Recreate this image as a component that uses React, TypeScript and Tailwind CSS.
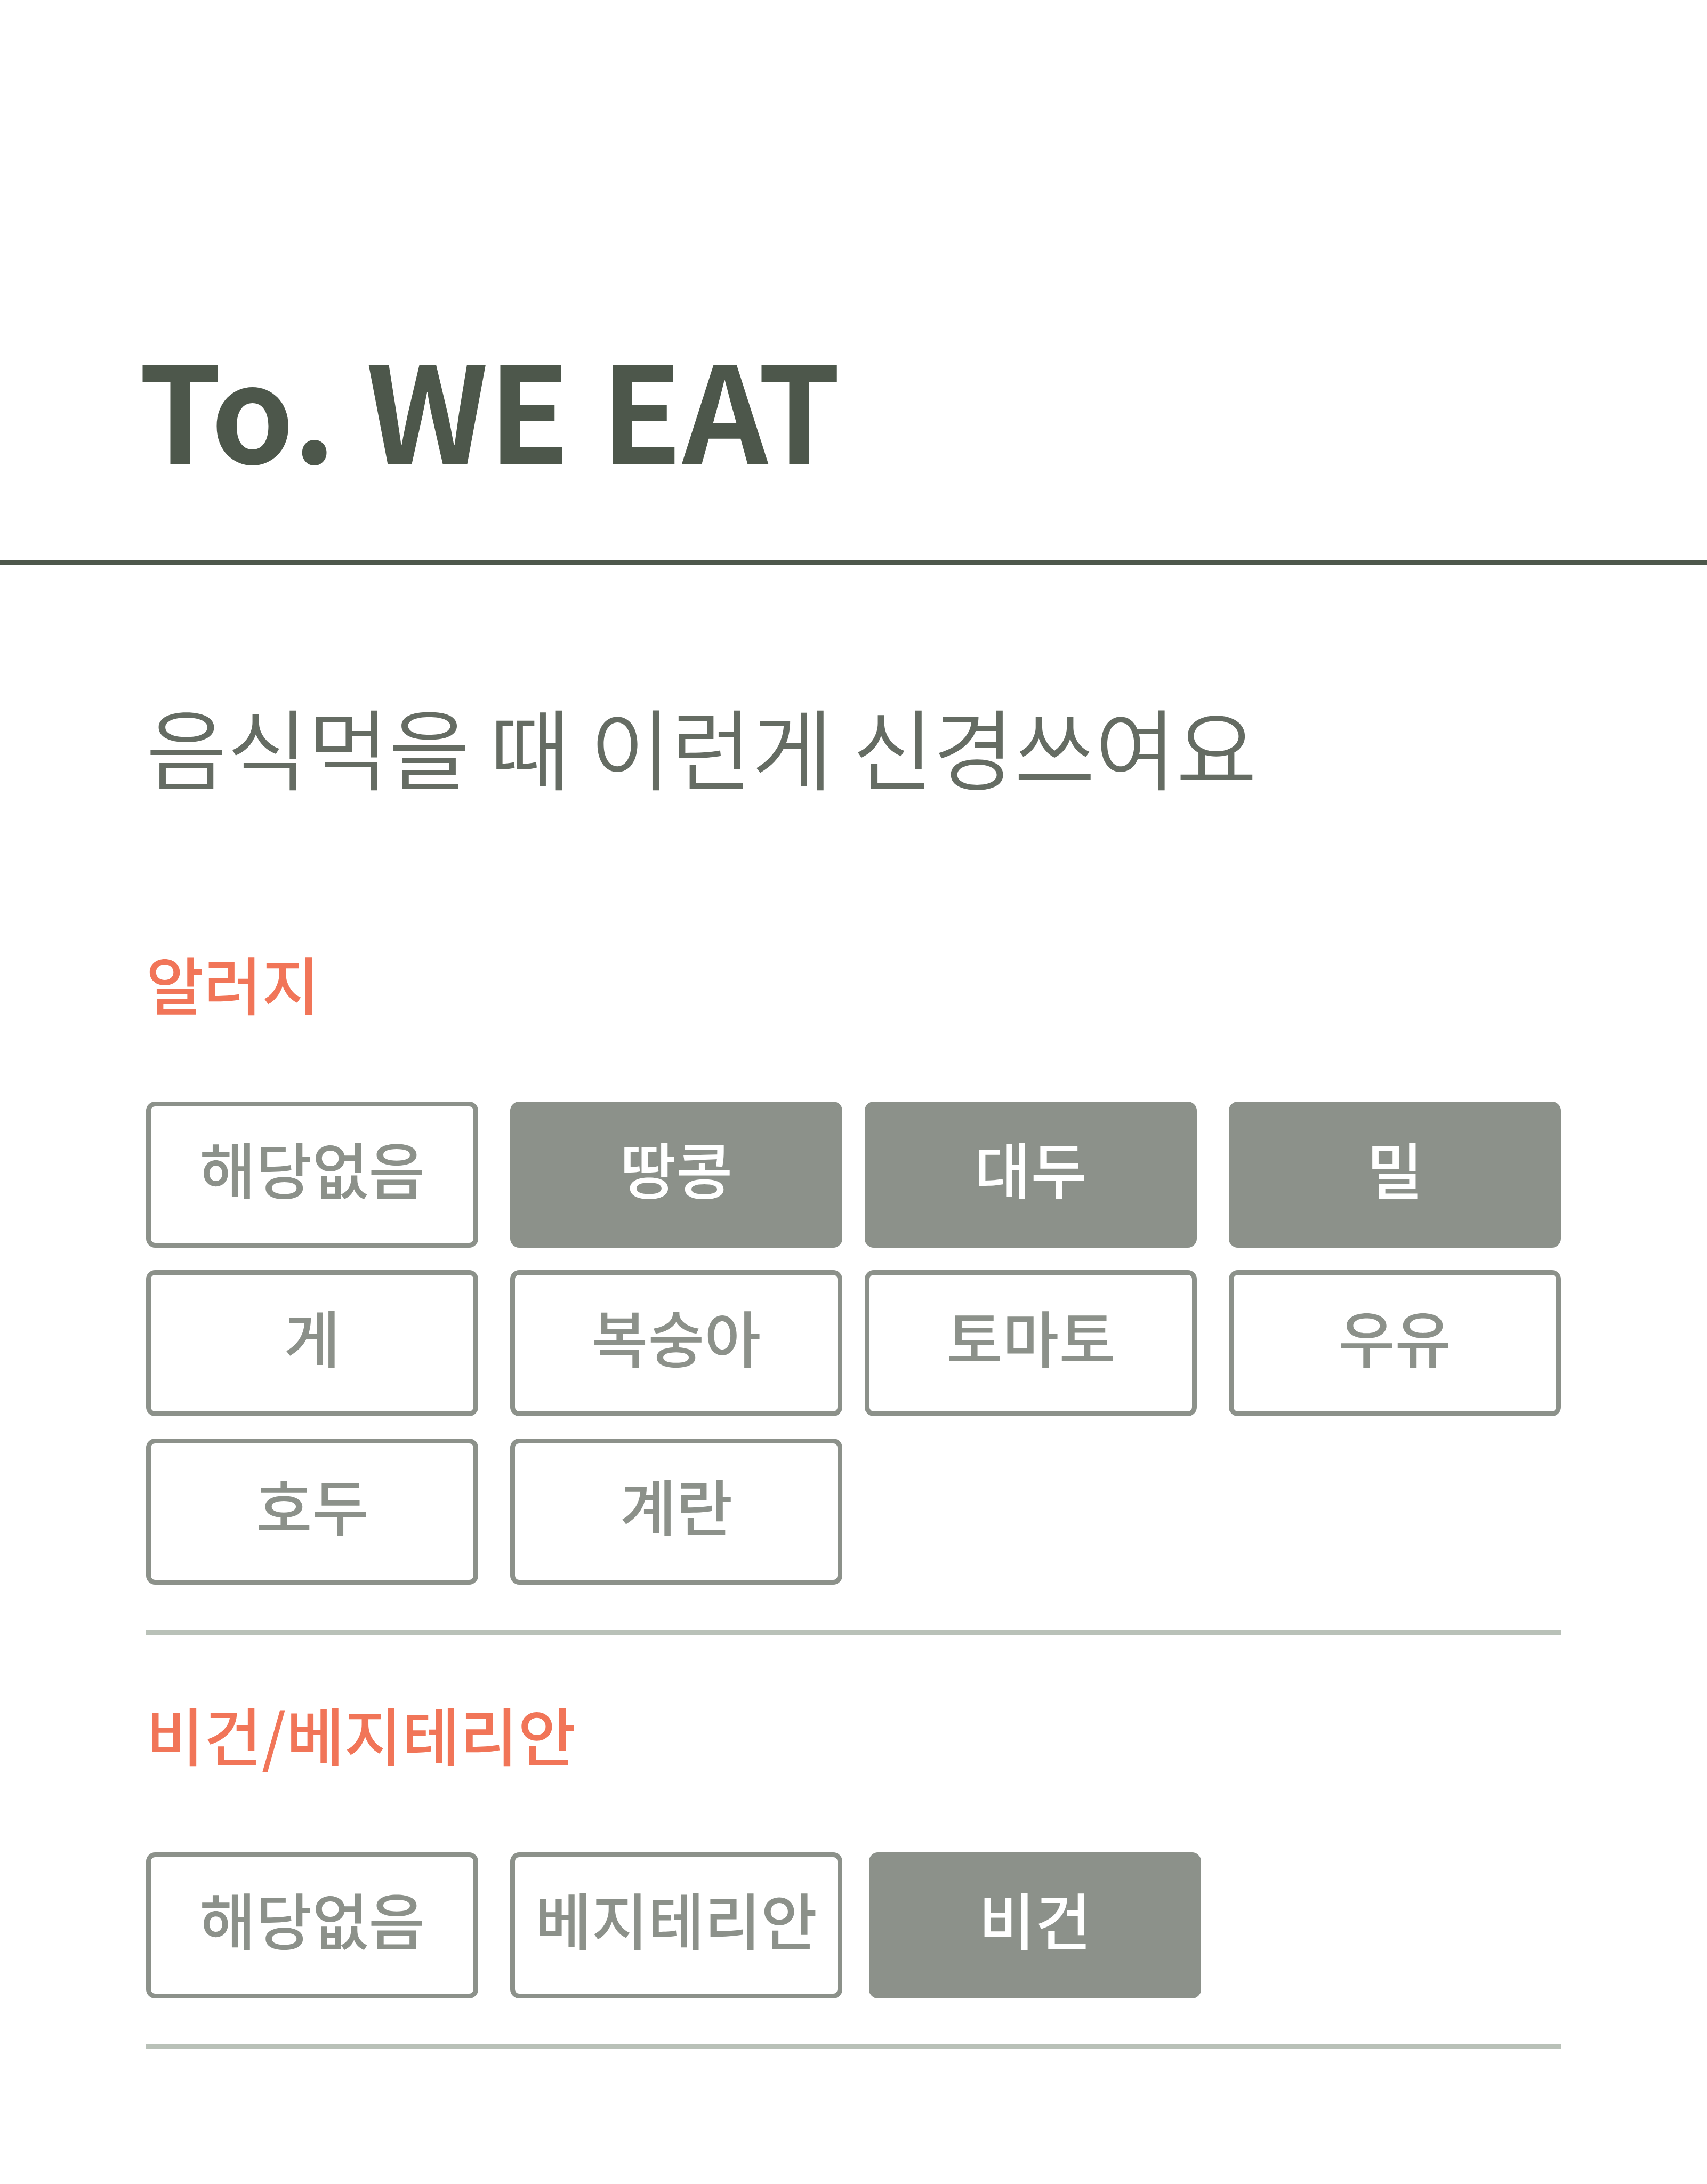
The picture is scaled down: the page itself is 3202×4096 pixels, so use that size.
import { useState } from "react";
import clsx from "clsx";

type Option = { name: string; column: string };

const ALLERGIES: Option[] = [
  { name: "해당없음", column: "col-start-1" },
  { name: "땅콩", column: "col-start-3" },
  { name: "대두", column: "col-start-5" },
  { name: "밀", column: "col-start-7" },
  { name: "게", column: "col-start-1" },
  { name: "복숭아", column: "col-start-3" },
  { name: "토마토", column: "col-start-5" },
  { name: "우유", column: "col-start-7" },
  { name: "호두", column: "col-start-1" },
  { name: "계란", column: "col-start-3" },
];

const DIETS: Option[] = [
  { name: "해당없음", column: "col-start-1" },
  { name: "베지테리안", column: "col-start-3" },
  { name: "비건", column: "col-start-5" },
];

function Chip({
  option,
  selected,
  onToggle,
}: {
  option: Option;
  selected: boolean;
  onToggle: () => void;
}) {
  return (
    <button
      type="button"
      aria-pressed={selected}
      onClick={onToggle}
      className={clsx(
        "flex h-[274px] cursor-pointer items-center justify-center whitespace-nowrap rounded-[17px] border-[9px] border-[#8c918a] pb-7 text-[115px] leading-[115px] font-medium",
        option.column,
        selected ? "bg-[#8c918a] text-white" : "bg-white text-[#8c918a]",
      )}
    >
      {option.name}
    </button>
  );
}

function Section({
  title,
  options,
  initial,
  gridClass,
}: {
  title: string;
  options: Option[];
  initial: string[];
  gridClass: string;
}) {
  const [selected, setSelected] = useState(initial);
  const toggle = (name: string) =>
    setSelected((current) =>
      current.includes(name)
        ? current.filter((item) => item !== name)
        : [...current, name],
    );

  return (
    <section
      aria-label={title}
      className="border-b-[9px] border-[#b9c1b8] pb-[85px]"
    >
      <h2 className="text-[118px] leading-[118px] font-medium text-[#f17558]">
        {title}
      </h2>
      <div className={clsx("mt-[164px] grid gap-y-[42px]", gridClass)}>
        {options.map((option) => (
          <Chip
            key={option.name}
            option={option}
            selected={selected.includes(option.name)}
            onToggle={() => toggle(option.name)}
          />
        ))}
      </div>
    </section>
  );
}

export default function App() {
  return (
    <div className="min-h-screen bg-white font-['Noto_Sans_CJK_KR',sans-serif]">
      <header className="border-b-[9px] border-[#4d574b] px-[260px] pt-[636px] pb-[164px]">
        <h1 className="text-[250px] leading-[250px] font-bold text-[#4d574b]">
          To. WE EAT
        </h1>
      </header>
      <main className="px-[274px] pt-[256px] pb-[253px]">
        <p className="text-[165px] leading-[166px] font-[350] text-[#656c63]">
          음식먹을 때 이런게 신경쓰여요
        </p>
        <div className="mt-[303px] flex flex-col gap-[126px]">
          <Section
            title="알러지"
            options={ALLERGIES}
            initial={["땅콩", "대두", "밀"]}
            gridClass="grid-cols-[1fr_60px_1fr_42px_1fr_60px_1fr]"
          />
          <Section
            title="비건/베지테리안"
            options={DIETS}
            initial={["비건"]}
            gridClass="grid-cols-[1fr_60px_1fr_50px_1fr_52px_1fr]"
          />
        </div>
      </main>
    </div>
  );
}
